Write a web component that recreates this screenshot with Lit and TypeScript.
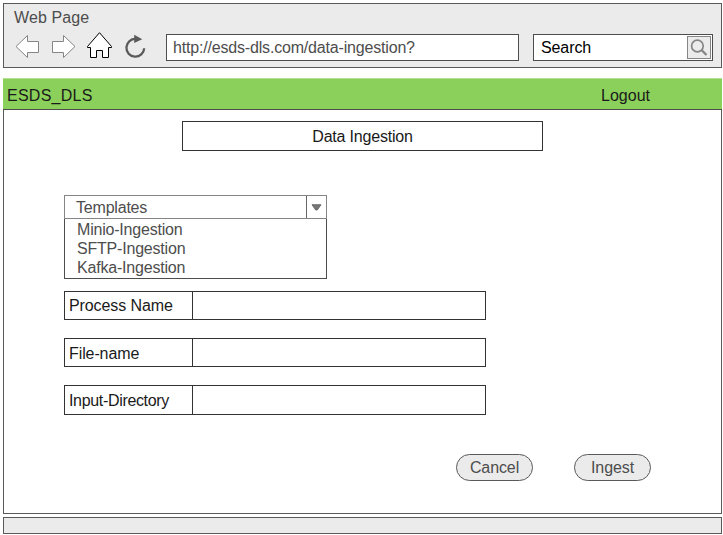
import { LitElement, html, css } from "lit";
import { customElement } from "lit/decorators.js";

@customElement("browser-bar")
class BrowserBar extends LitElement {
  static styles = css`
    :host { display: block; box-sizing: border-box; height: 65px; border: 1px solid #5a5a5a; background: #ebebeb; }
    .title { height: 20px; padding: 4px 0 0 10px; line-height: 20px; letter-spacing: .1px; color: #4d4d4d; }
    .row { display: flex; align-items: flex-start; height: 30px; margin-top: 3px; padding: 0 8px 0 10px; }
    .icons { flex: 0 0 152px; height: 30px; display: block; }
    .box { flex: none; box-sizing: border-box; height: 27px; margin-top: 3px; border: 1px solid #4d4d4d; background: #fff; line-height: 25px; }
    .url { width: 353px; padding-left: 6px; letter-spacing: -.18px; color: #4d4d4d; }
    .search { display: flex; width: 180px; margin-left: 14px; padding: 1px 1px 0 7px; color: #000; justify-content: space-between; }
    .go { box-sizing: border-box; width: 24px; height: 23px; border: 1px solid #858585; background: #ebebeb; }
    .go svg { display: block; }
    .label { margin-top: -1px; letter-spacing: -.1px; }
  `;
  render() {
    return html`
      <div class="title">Web Page</div>
      <div class="row">
        <svg class="icons" width="152" height="30" viewBox="14 31 152 30" fill="#fff" stroke-linejoin="miter">
          <path d="M16 46.5 L27.5 35.5 V41.5 H38.5 V52.5 H27.5 V57.5 Z" stroke="#858585"/>
          <path d="M75 46.5 L63.5 35.5 V41.5 H52.5 V52.5 H63.5 V57.5 Z" stroke="#858585"/>
          <path d="M99.5 32.7 L111.5 46.5 V47.5 H108.5 V57.5 H102.5 V50.5 H96.5 V57.5 H90.5 V47.5 H87.5 V46.5 Z" stroke="#000"/>
          <path d="M136 38.9 A8.9 8.9 0 1 0 144.2 48.2" fill="none" stroke="#5a5a5a" stroke-width="2.3"/>
          <path d="M134.2 34.7 L142.2 39.2 L134.2 43 Z" fill="#5a5a5a"/>
        </svg>
        <div class="box url">http://esds-dls.com/data-ingestion?</div>
        <div class="box search">
          <span class="label">Search</span>
          <span class="go">
            <svg width="22" height="21" viewBox="0 0 22 21" fill="none" stroke="#858585">
              <circle cx="9.4" cy="9" r="5.8" stroke-width="1.7"/>
              <path d="M13.5 13 L18.5 18" stroke-width="2.3"/>
            </svg>
          </span>
        </div>
      </div>
    `;
  }
}

@customElement("template-select")
class TemplateSelect extends LitElement {
  static styles = css`
    :host { display: block; width: 263px; color: #4d4d4d; letter-spacing: -.2px; }
    .head { display: flex; box-sizing: border-box; height: 24px; border: 1px solid #858585; line-height: 24px; }
    .value { flex: 1; height: 22px; padding-left: 11px; }
    .arrow { display: flex; box-sizing: border-box; align-items: center; width: 20px; padding-left: 4px; border-left: 1px solid #666; }
    .list { box-sizing: border-box; height: 60px; margin: 0; padding: 1px 0 0 12px; border: 1px solid #4d4d4d; border-top: 0; list-style: none; line-height: 19px; }
  `;
  render() {
    return html`
      <div class="head">
        <div class="value">Templates</div>
        <div class="arrow"><svg width="11" height="7" viewBox="0 0 11 7"><path d="M1 .7H10L6.3 6H4.7Z" fill="#777" stroke="#5a5a5a" stroke-width=".8"/></svg></div>
      </div>
      <ul class="list">
        ${["Minio-Ingestion", "SFTP-Ingestion", "Kafka-Ingestion"].map((t) => html`<li>${t}</li>`)}
      </ul>
    `;
  }
}

@customElement("app-root")
class AppRoot extends LitElement {
  static styles = css`
    :host { display: block; box-sizing: border-box; width: 723px; height: 535px; padding: 3px 1px 0 3px; overflow: hidden; background: #fff; font: 16px "Liberation Sans", Arial, sans-serif; color: #1a1a1a; }
    .banner { display: flex; box-sizing: border-box; justify-content: space-between; height: 32px; margin-top: 10px; padding: 1px 72px 0 4px; border-top: 1px solid #b4e094; border-bottom: 1px solid #4d4d4d; background: #8ad05a; line-height: 31px; }
    .brand { letter-spacing: .25px; }
    .page { box-sizing: border-box; height: 404px; padding: 11px 0 0 60px; border: 1px solid #5a5a5a; border-top: 0; }
    .heading { box-sizing: border-box; width: 361px; height: 30px; margin-left: 118px; border: 1px solid #333; line-height: 29px; letter-spacing: -.2px; text-align: center; }
    template-select { margin-top: 44px; }
    .fields { display: grid; grid-template-rows: 29px 29px 30px; row-gap: 18px; margin-top: 12px; }
    .field { display: flex; box-sizing: border-box; width: 422px; border: 1px solid #333; line-height: 28px; letter-spacing: -.1px; }
    .field + .field { line-height: 30px; }
    .field:last-child { letter-spacing: -.33px; }
    .name { box-sizing: border-box; width: 128px; height: 27px; padding-left: 4px; border-right: 1px solid #333; }
    .field:last-child .name { height: 28px; }
    .actions { display: flex; gap: 41px; margin: 39px 0 0 392px; }
    .button { box-sizing: border-box; width: 77px; height: 27px; border: 1px solid #5a5a5a; border-radius: 14px; background: #ebebeb; color: #4d4d4d; line-height: 25px; letter-spacing: -.1px; text-align: center; }
    .status { box-sizing: border-box; height: 17px; margin-top: 3px; border: 1px solid #5a5a5a; background: #ebebeb; }
  `;
  render() {
    return html`
      <browser-bar></browser-bar>
      <div class="banner"><span class="brand">ESDS_DLS</span><span>Logout</span></div>
      <div class="page">
        <div class="heading">Data Ingestion</div>
        <template-select></template-select>
        <div class="fields">
          ${["Process Name", "File-name", "Input-Directory"].map((n) => html`<div class="field"><div class="name">${n}</div></div>`)}
        </div>
        <div class="actions">
          <div class="button">Cancel</div>
          <div class="button">Ingest</div>
        </div>
      </div>
      <div class="status"></div>
    `;
  }
}
